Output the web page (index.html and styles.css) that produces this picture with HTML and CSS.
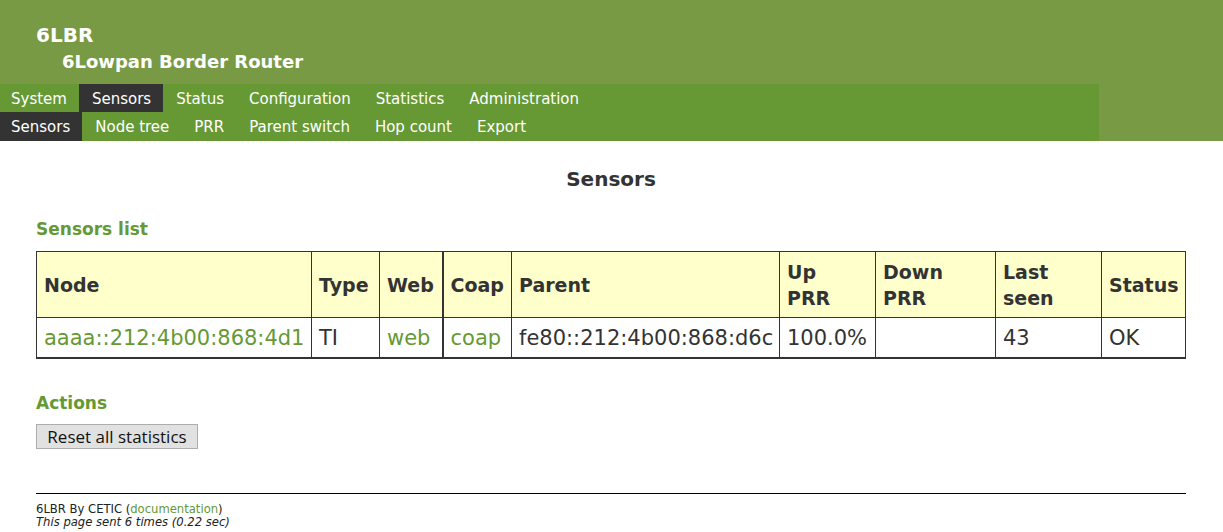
FILE: index.html
```html
<!DOCTYPE html>
<html>
<head>
<meta charset="utf-8">
<title>6LBR</title>
<link rel="stylesheet" href="styles.css">
</head>
<body>
<div class="header">
  <div class="titles">
    <div class="title">6LBR</div>
    <div class="subtitle">6Lowpan Border Router</div>
  </div>
  <div class="menus">
    <div class="menu">
      <a href="#">System</a>
      <a href="#" class="active">Sensors</a>
      <a href="#">Status</a>
      <a href="#">Configuration</a>
      <a href="#">Statistics</a>
      <a href="#">Administration</a>
    </div>
    <div class="menu">
      <a href="#" class="active">Sensors</a>
      <a href="#">Node tree</a>
      <a href="#">PRR</a>
      <a href="#">Parent switch</a>
      <a href="#">Hop count</a>
      <a href="#">Export</a>
    </div>
  </div>
</div>
<div class="content">
  <h1>Sensors</h1>
  <h2>Sensors list</h2>
  <table class="sensors">
    <colgroup>
      <col class="w-node">
      <col class="w-type">
      <col class="w-web">
      <col class="w-coap">
      <col class="w-parent">
      <col class="w-up">
      <col class="w-down">
      <col class="w-last">
      <col class="w-status">
    </colgroup>
    <tr>
      <th>Node</th>
      <th>Type</th>
      <th class="c-web">Web</th>
      <th>Coap</th>
      <th>Parent</th>
      <th>Up<br>PRR</th>
      <th>Down<br>PRR</th>
      <th>Last<br>seen</th>
      <th>Status</th>
    </tr>
    <tr>
      <td><a href="#">aaaa::212:4b00:868:4d1</a></td>
      <td>TI</td>
      <td class="c-web"><a href="#">web</a></td>
      <td><a href="#">coap</a></td>
      <td>fe80::212:4b00:868:d6c</td>
      <td>100.0%</td>
      <td></td>
      <td>43</td>
      <td>OK</td>
    </tr>
  </table>
  <h2 class="actions">Actions</h2>
  <button class="btn">Reset all statistics</button>
  <div class="footer">
    <div>6LBR By CETIC (<a href="#">documentation</a>)</div>
    <div class="sent">This page sent 6 times (0.22 sec)</div>
  </div>
</div>
</body>
</html>
```
FILE: styles.css
```css
html, body {
  margin: 0;
  padding: 0;
  background: #ffffff;
  font-family: "DejaVu Sans", Verdana, sans-serif;
  color: #333333;
}
a {
  color: #669933;
  text-decoration: none;
}
.header {
  background: #789a45;
  color: #ffffff;
}
.titles {
  height: 84px;
  box-sizing: border-box;
  padding-top: 23px;
}
.title {
  font-size: 20px;
  font-weight: bold;
  margin-left: 36px;
  line-height: 24px;
}
.subtitle {
  font-size: 18px;
  font-weight: bold;
  margin-left: 62px;
  line-height: 30px;
}
.menus {
  width: 1099px;
  background: #669933;
}
.menu {
  display: flex;
  font-size: 15px;
}
.menu:first-child {
  height: 28px;
}
.menu:last-child {
  height: 29px;
}
.menu a {
  color: #ffffff;
  padding: 1px 12px 0 11px;
  display: flex;
  align-items: center;
}
.menu a + a {
  padding-left: 13px;
}
.menu a.active {
  background: #333333;
}
.content {
  padding: 0 37px 0 36px;
}
h1 {
  margin: 0;
  padding-top: 26px;
  text-align: center;
  font-size: 20px;
  line-height: 24px;
  font-weight: bold;
  color: #333333;
}
h2 {
  margin: 0;
  font-size: 17px;
  line-height: 22px;
  color: #669933;
  font-weight: bold;
}
.content h1 + h2 {
  margin-top: 27px;
}
.sensors {
  margin-top: 11px;
  width: 1150px;
  table-layout: fixed;
  border-collapse: collapse;
  border: 1px solid #333333;
  border-bottom: 2px solid #333333;
}
.w-node { width: 275px; }
.w-type { width: 68px; }
.w-web { width: 63px; }
.w-coap { width: 69px; }
.w-parent { width: 268px; }
.w-up { width: 96px; }
.w-down { width: 120px; }
.w-last { width: 106px; }
.w-status { width: 84px; }
.sensors th, .sensors td {
  border: 1px solid #333333;
  padding: 0 0 0 7px;
  text-align: left;
  vertical-align: middle;
  white-space: nowrap;
  overflow: hidden;
}
.sensors th {
  background: #ffffcc;
  height: 65px;
  line-height: 26px;
  font-size: 19px;
}
.sensors td {
  height: 39px;
  font-size: 21px;
}
.sensors .c-web {
  border-right: 2px solid #333333;
}
h2.actions {
  margin-top: 33px;
}
.btn {
  margin-top: 10px;
  font-family: "Open Sans", "DejaVu Sans", sans-serif;
  font-size: 17px;
  background: #e1e1e1;
  border: 1px solid #adadad;
  color: #111111;
  padding: 0;
  height: 25px;
  width: 162px;
  line-height: 23px;
}
.footer {
  margin-top: 44px;
  border-top: 1px solid #000000;
  padding-top: 9px;
  font-size: 11.6px;
  line-height: 13px;
  color: #222222;
}
.sent {
  font-style: italic;
}
```
